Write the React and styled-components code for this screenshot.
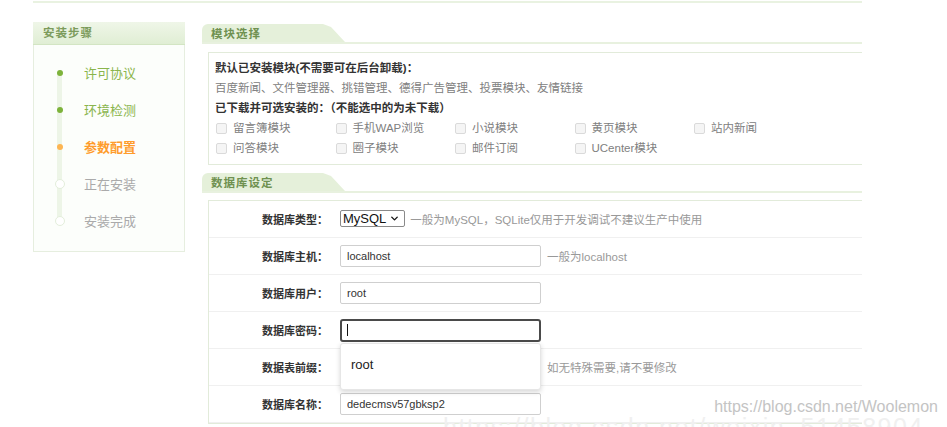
import React from 'react';
import styled, { createGlobalStyle } from 'styled-components';
import { ChevronDown } from 'lucide-react';

const FONT = '"Liberation Sans", "Noto Sans CJK SC", sans-serif';

const GlobalStyle = createGlobalStyle`
  html, body {
    margin: 0;
    padding: 0;
    background: #fff;
  }
  body {
    font-family: ${FONT};
    color: #333;
  }
`;

const Page = styled.div`
  position: relative;
  width: 947px;
  height: 427px;
  overflow: hidden;
  background: #fff;
`;

const TopRule = styled.div`
  margin: 1px 0 0 33px;
  width: 829px;
  height: 2px;
  background: #e9f2e1;
`;

const Layout = styled.div`
  display: flex;
  align-items: flex-start;
  padding: 19px 0 0 33px;
`;

/* ---------- sidebar ---------- */

const Sidebar = styled.div`
  width: 152px;
  flex-shrink: 0;
`;

const SideHead = styled.div`
  height: 22px;
  line-height: 22px;
  padding-left: 10px;
  background: linear-gradient(#eff6e8, #e0eed4);
  border-bottom: 1px solid #d3e5c3;
  font-size: 11.5px;
  font-weight: bold;
  color: #7c9b5b;
  letter-spacing: 1px;
`;

const SideBody = styled.div`
  height: 207px;
  box-sizing: border-box;
  border: 1px solid #e6eedf;
  border-top: none;
  background: #fcfefb;
  padding-top: 9px;
`;

const StepList = styled.ul`
  position: relative;
  list-style: none;
  margin: 0;
  padding: 0;

  &::before {
    content: '';
    position: absolute;
    left: 23px;
    top: 18px;
    height: 148px;
    width: 5px;
    border-radius: 3px;
    background: #edf5e7;
  }
`;

const Step = styled.li`
  position: relative;
  display: flex;
  align-items: center;
  height: 37px;
  padding-left: 21px;
`;

const Marker = styled.span`
  width: 10px;
  height: 10px;
  box-sizing: border-box;
  display: flex;
  align-items: center;
  justify-content: center;
  border-radius: 50%;
  ${({ $state }) =>
    $state === 'todo'
      ? 'border: 1px solid #e3eedb; background: #fff;'
      : ''}

  &::after {
    content: '';
    width: 6px;
    height: 6px;
    border-radius: 50%;
    background: ${({ $state }) =>
      $state === 'done' ? '#7db33b' : $state === 'current' ? '#fdb552' : 'transparent'};
  }
`;

const StepLabel = styled.span`
  margin-left: 19px;
  font-size: 13px;
  font-weight: ${({ $state }) => ($state === 'current' ? 'bold' : 'normal')};
  color: ${({ $state }) =>
    $state === 'done' ? '#8ab54c' : $state === 'current' ? '#ff9c2c' : '#aaa'};
`;

/* ---------- main ---------- */

const Main = styled.div`
  margin: 2px 0 0 17px;
  width: 660px;
  flex-shrink: 0;
`;

const SectionHead = styled.div`
  display: flex;
  align-items: flex-end;
  border-bottom: 2px solid #e8f1df;
  margin-top: ${({ $top }) => $top || 0}px;
`;

const Tab = styled.div`
  width: 143px;
  height: 18px;
  line-height: 20px;
  padding-left: 9px;
  box-sizing: border-box;
  background: #e5f0da;
  border-top-left-radius: 6px;
  clip-path: polygon(0 0, calc(100% - 22px) 0, calc(100% - 14px) 3px, 100% 100%, 0 100%);
  font-size: 11.5px;
  font-weight: bold;
  color: #6f9150;
  letter-spacing: 1px;
`;

const Panel = styled.div`
  margin: ${({ $gap }) => $gap}px 0 0 6px;
  border: 1px solid #e2ebda;
  border-right: none;
  background: #fff;
`;

const ModuleBody = styled.div`
  padding: 5px 0 6px 6px;
  font-size: 11.5px;
  line-height: 20px;
`;

const Strong = styled.div`
  font-weight: bold;
  color: #333;
`;

const Muted = styled.div`
  color: #808080;
`;

const CheckGrid = styled.div`
  display: grid;
  grid-template-columns: repeat(5, 119.5px);
`;

const CheckItem = styled.label`
  display: flex;
  align-items: center;
  height: 20px;
  color: #808080;
`;

const Box = styled.span`
  width: 11px;
  height: 11px;
  margin: 0 6px 0 1px;
  box-sizing: border-box;
  border: 1px solid #dadada;
  border-radius: 2px;
  background: #f5f5f5;
`;

const Row = styled.div`
  display: flex;
  align-items: center;
  height: 37px;
  box-sizing: border-box;
  border-bottom: 1px solid #f0f0f0;
`;

const Label = styled.div`
  width: 119px;
  flex-shrink: 0;
  text-align: right;
  font-size: 11px;
  font-weight: bold;
  color: #333;
`;

const Field = styled.div`
  position: relative;
  margin-left: 12px;
  display: flex;
  align-items: center;
`;

const Input = styled.input`
  width: 201px;
  height: 22px;
  box-sizing: border-box;
  border: 1px solid #cfcfcf;
  border-radius: 2px;
  padding: 0 6px;
  font-family: ${FONT};
  font-size: 11px;
  color: #333;
  background: #fff;
  outline: none;
`;

const FocusedInput = styled.div`
  width: 201px;
  height: 23px;
  box-sizing: border-box;
  border: 2px solid #4a4a4a;
  border-radius: 3px;
  padding-left: 5px;
  display: flex;
  align-items: center;
`;

const Caret = styled.span`
  width: 1px;
  height: 12px;
  background: #111;
`;

const Select = styled.div`
  display: flex;
  align-items: center;
  gap: 3px;
  height: 17px;
  margin-top: -2px;
  padding: 0 4px 0 2px;
  box-sizing: border-box;
  border: 1px solid #8a8a8a;
  border-radius: 2px;
  font-size: 13px;
  color: #111;
`;

const Hint = styled.span`
  margin-left: ${({ $gap }) => $gap}px;
  font-size: 11.5px;
  color: #999;
  white-space: nowrap;
`;

const Suggest = styled.div`
  position: absolute;
  left: 0;
  top: 24px;
  width: 201px;
  height: 47px;
  box-sizing: border-box;
  background: #fff;
  border: 1px solid #e6e6e6;
  border-radius: 3px;
  box-shadow: 0 2px 5px rgba(0, 0, 0, 0.16);
  padding: 0 0 4px 10px;
  display: flex;
  align-items: center;
  font-size: 13px;
  color: #222;
  z-index: 2;
`;

const Watermark = styled.div`
  position: absolute;
  right: 9px;
  top: 398px;
  font-family: ${FONT};
  font-size: 16px;
  color: #c4c4c4;
  z-index: 4;
`;

const GhostMark = styled.div`
  position: absolute;
  left: 443px;
  top: 413px;
  font-family: ${FONT};
  font-size: 25px;
  letter-spacing: 1.5px;
  color: #f0f0f0;
  z-index: 3;
  white-space: nowrap;
`;

const steps = [
  { name: '许可协议', state: 'done' },
  { name: '环境检测', state: 'done' },
  { name: '参数配置', state: 'current' },
  { name: '正在安装', state: 'todo' },
  { name: '安装完成', state: 'todo' },
];

const modules = [
  '留言簿模块', '手机WAP浏览', '小说模块', '黄页模块', '站内新闻',
  '问答模块', '圈子模块', '邮件订阅', 'UCenter模块',
];

const App = () => (
  <Page>
    <GlobalStyle />
    <TopRule />
    <Layout>
      <Sidebar>
        <SideHead>安装步骤</SideHead>
        <SideBody>
          <StepList>
            {steps.map((s) => (
              <Step key={s.name}>
                <Marker $state={s.state} />
                <StepLabel $state={s.state}>{s.name}</StepLabel>
              </Step>
            ))}
          </StepList>
        </SideBody>
      </Sidebar>

      <Main>
        <SectionHead>
          <Tab>模块选择</Tab>
        </SectionHead>
        <Panel $gap={8}>
          <ModuleBody>
            <Strong>默认已安装模块(不需要可在后台卸载)：</Strong>
            <Muted>百度新闻、文件管理器、挑错管理、德得广告管理、投票模块、友情链接</Muted>
            <Strong>已下载并可选安装的：（不能选中的为未下载）</Strong>
            <CheckGrid>
              {modules.map((m) => (
                <CheckItem key={m}>
                  <Box />
                  {m}
                </CheckItem>
              ))}
            </CheckGrid>
          </ModuleBody>
        </Panel>

        <SectionHead $top={8}>
          <Tab>数据库设定</Tab>
        </SectionHead>
        <Panel $gap={7}>
          <Row>
            <Label>数据库类型：</Label>
            <Field>
              <Select>
                MySQL
                <ChevronDown size={11} strokeWidth={3} />
              </Select>
              <Hint $gap={5}>一般为MySQL，SQLite仅用于开发调试不建议生产中使用</Hint>
            </Field>
          </Row>
          <Row>
            <Label>数据库主机：</Label>
            <Field>
              <Input readOnly defaultValue="localhost" />
              <Hint $gap={6}>一般为localhost</Hint>
            </Field>
          </Row>
          <Row>
            <Label>数据库用户：</Label>
            <Field>
              <Input readOnly defaultValue="root" />
            </Field>
          </Row>
          <Row>
            <Label>数据库密码：</Label>
            <Field>
              <FocusedInput>
                <Caret />
              </FocusedInput>
              <Suggest>root</Suggest>
            </Field>
          </Row>
          <Row>
            <Label>数据表前缀：</Label>
            <Field>
              <Input readOnly defaultValue="dede_" />
              <Hint $gap={6}>如无特殊需要,请不要修改</Hint>
            </Field>
          </Row>
          <Row>
            <Label>数据库名称：</Label>
            <Field>
              <Input readOnly defaultValue="dedecmsv57gbksp2" />
            </Field>
          </Row>
        </Panel>
      </Main>
    </Layout>
    <GhostMark>https://blog.csdn.net/weixin_51458904</GhostMark>
    <Watermark>https://blog.csdn.net/Woolemon</Watermark>
  </Page>
);

export default App;
